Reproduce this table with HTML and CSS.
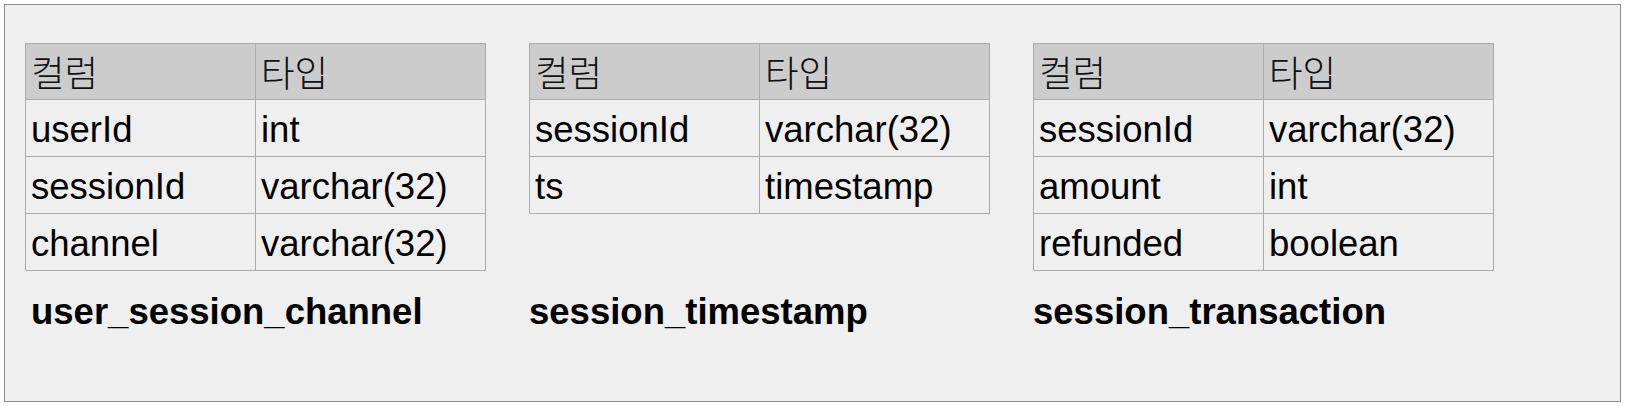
FILE: index.html
```html
<!DOCTYPE html>
<html lang="ko">
<head>
<meta charset="utf-8">
<title>Tables</title>
<link rel="stylesheet" href="styles.css">
</head>
<body>
<div class="frame">
  <table class="schema">
    <tr class="head"><td>컬럼</td><td>타입</td></tr>
    <tr><td>userId</td><td>int</td></tr>
    <tr><td>sessionId</td><td>varchar(32)</td></tr>
    <tr><td>channel</td><td>varchar(32)</td></tr>
  </table>
  <table class="schema">
    <tr class="head"><td>컬럼</td><td>타입</td></tr>
    <tr><td>sessionId</td><td>varchar(32)</td></tr>
    <tr><td>ts</td><td>timestamp</td></tr>
  </table>
  <table class="schema">
    <tr class="head"><td>컬럼</td><td>타입</td></tr>
    <tr><td>sessionId</td><td>varchar(32)</td></tr>
    <tr><td>amount</td><td>int</td></tr>
    <tr><td>refunded</td><td>boolean</td></tr>
  </table>
  <div class="title title-indent">user_session_channel</div>
  <div class="title">session_timestamp</div>
  <div class="title">session_transaction</div>
</div>
</body>
</html>
```
FILE: styles.css
```css
html, body {
  margin: 0;
  padding: 0;
  background: #ffffff;
}
body {
  font-family: "Liberation Sans", "Noto Sans CJK KR", Arial, sans-serif;
  color: #000;
}
.frame {
  margin: 4px 5px 4px 4px;
  border: 1px solid #8c8c8c;
  background: #efefef;
  padding: 38px 0 0 20px;
  box-sizing: border-box;
  height: 398px;
  display: grid;
  grid-template-columns: repeat(3, 461px);
  grid-template-rows: auto auto;
  column-gap: 43px;
  row-gap: 20px;
  align-content: start;
  align-items: start;
}
.schema {
  border-collapse: collapse;
  width: 461px;
  table-layout: fixed;
}
.schema td {
  border: 1px solid #ababab;
  font-size: 36.5px;
  line-height: 41px;
  padding: 9px 5px 6px;
  white-space: nowrap;
  background: #efefef;
}
.schema .head td {
  background: #cccccc;
  padding: 7px 5px 7px;
  font-family: "Noto Sans CJK KR", sans-serif;
  font-weight: 300;
  color: #111;
}
.title {
  padding-left: 0;
  font-size: 36.5px;
  line-height: 41px;
  font-weight: 700;
}
.title-indent {
  padding-left: 6px;
}
```
